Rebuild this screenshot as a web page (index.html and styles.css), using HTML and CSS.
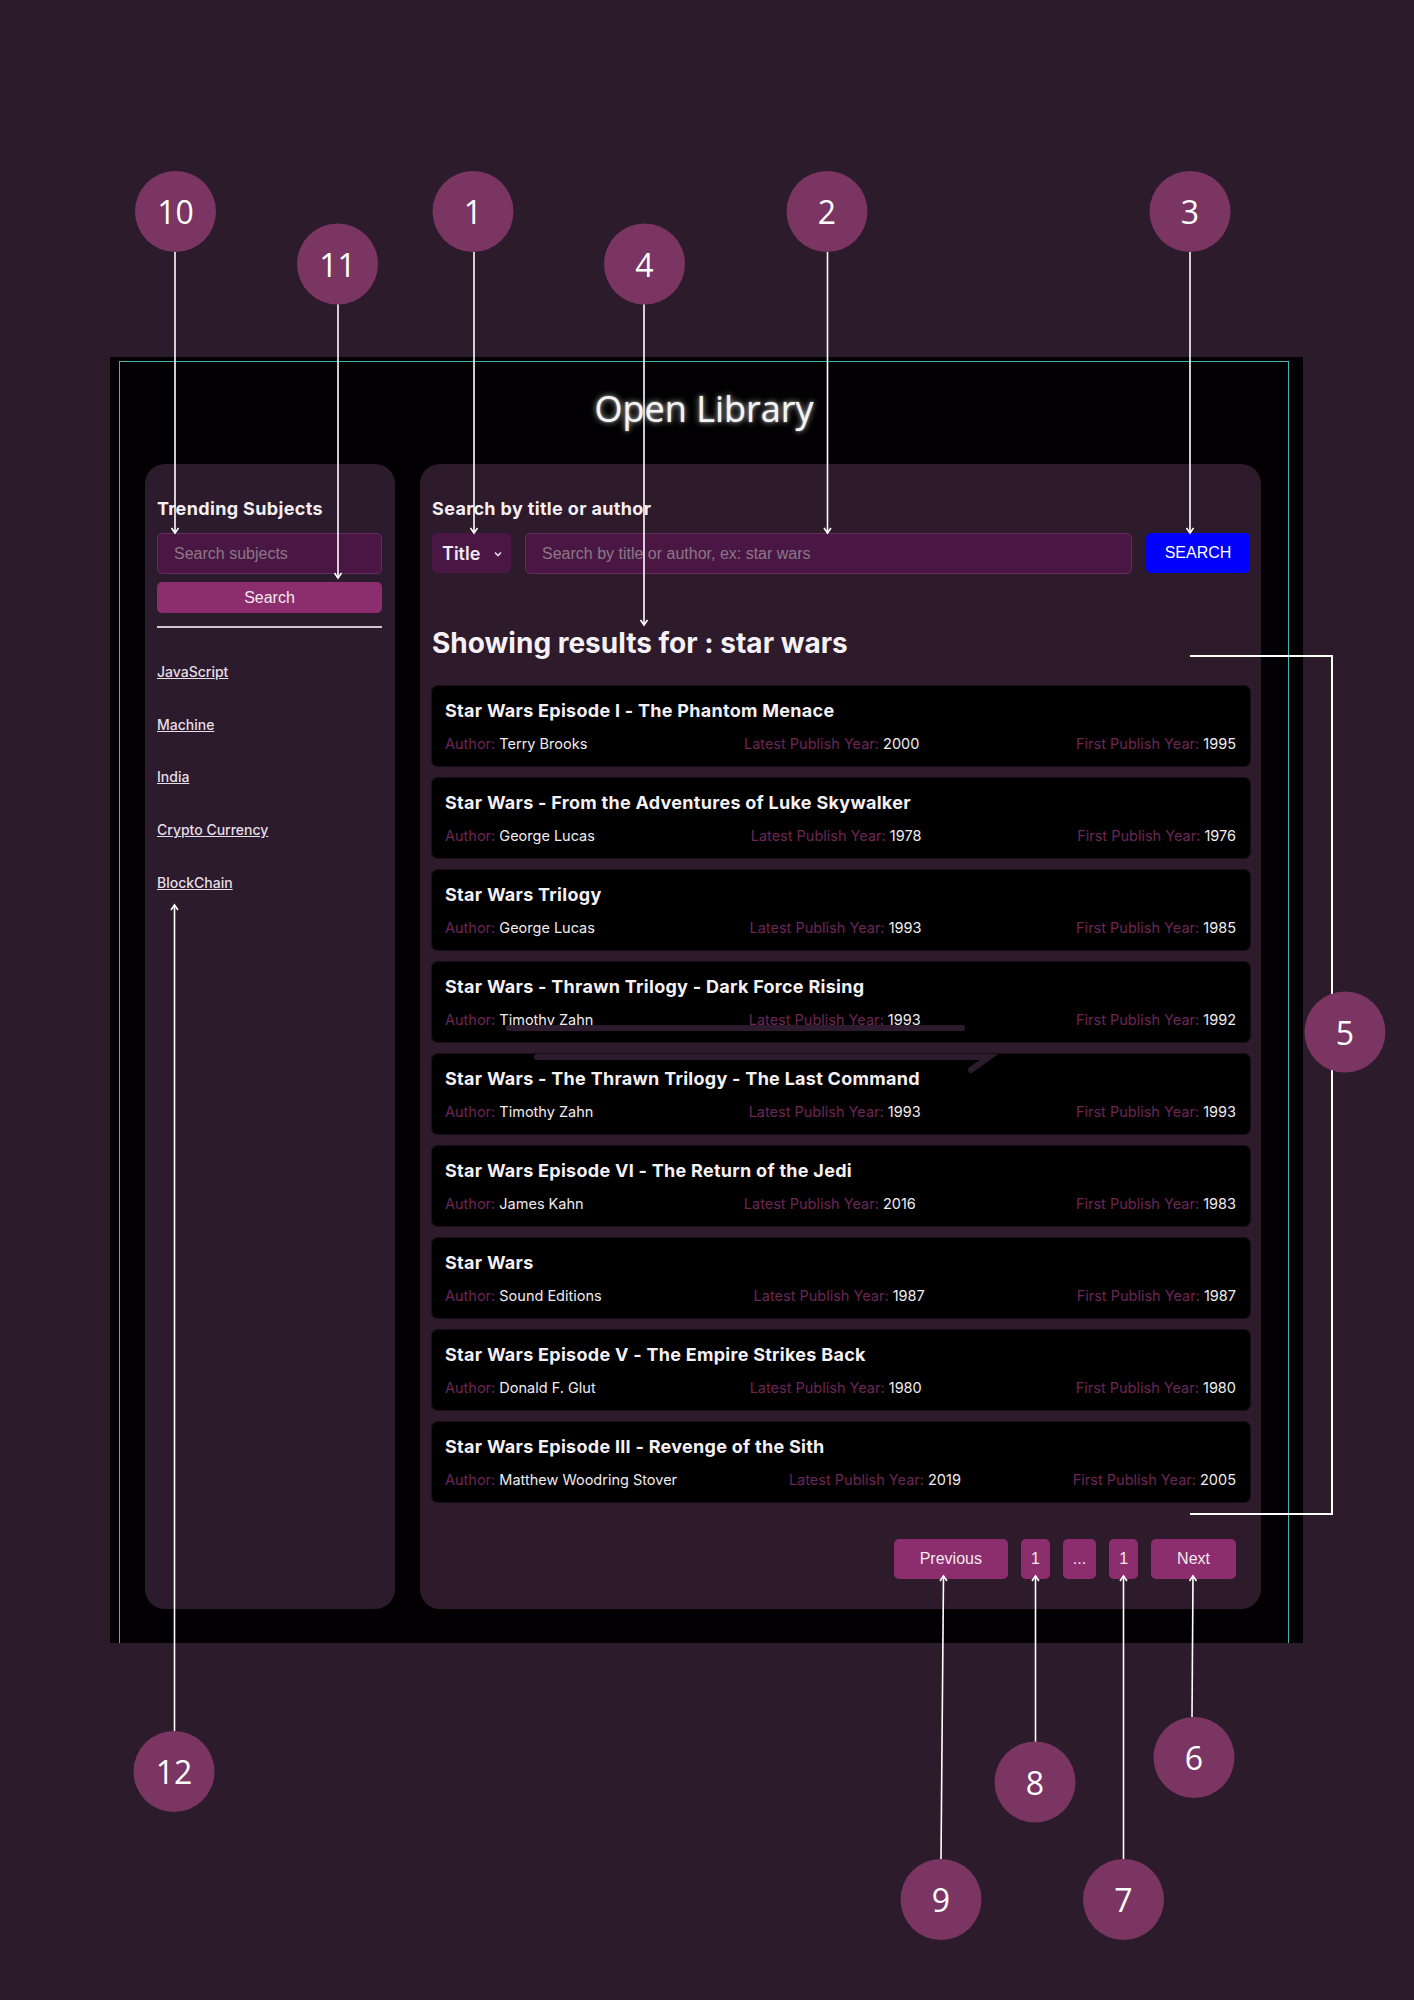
FILE: index.html
```html
<!DOCTYPE html>
<html lang="en">
<head>
<meta charset="utf-8">
<title>Open Library</title>
<link rel="stylesheet" href="styles.css">
</head>
<body>
<div class="app">
  <div class="frame">
    <h1 class="brand">Open Library</h1>
    <div class="panels">
      <aside class="side">
        <h2 class="label">Trending Subjects</h2>
        <input class="field side-field" type="text" placeholder="Search subjects">
        <button class="btn side-btn">Search</button>
        <hr class="rule">
        <nav class="subjects">
          <a href="#">JavaScript</a>
          <a href="#">Machine</a>
          <a href="#">India</a>
          <a href="#">Crypto Currency</a>
          <a href="#">BlockChain</a>
        </nav>
      </aside>
      <main class="main">
        <h2 class="label">Search by title or author</h2>
        <div class="search-row">
          <div class="select"><span>Title</span><svg class="chev" width="8" height="6" viewBox="0 0 8 6"><path d="M1 1.5 L4 4.5 L7 1.5" fill="none" stroke="#e8dce6" stroke-width="1.6"/></svg></div>
          <input class="field main-field" type="text" placeholder="Search by title or author, ex: star wars">
          <button class="btn-blue">SEARCH</button>
        </div>
        <h3 class="results">Showing results for : star wars</h3>
        <div class="cards">
          <div class="card"><div class="card-title">Star Wars Episode I - The Phantom Menace</div><div class="meta"><span><em>Author:</em> Terry Brooks</span><span><em>Latest Publish Year:</em> 2000</span><span><em>First Publish Year:</em> 1995</span></div></div>
          <div class="card"><div class="card-title">Star Wars - From the Adventures of Luke Skywalker</div><div class="meta"><span><em>Author:</em> George Lucas</span><span><em>Latest Publish Year:</em> 1978</span><span><em>First Publish Year:</em> 1976</span></div></div>
          <div class="card"><div class="card-title">Star Wars Trilogy</div><div class="meta"><span><em>Author:</em> George Lucas</span><span><em>Latest Publish Year:</em> 1993</span><span><em>First Publish Year:</em> 1985</span></div></div>
          <div class="card"><div class="card-title">Star Wars - Thrawn Trilogy - Dark Force Rising</div><div class="meta"><span><em>Author:</em> Timothy Zahn</span><span><em>Latest Publish Year:</em> 1993</span><span><em>First Publish Year:</em> 1992</span></div></div>
          <div class="card"><div class="card-title">Star Wars - The Thrawn Trilogy - The Last Command</div><div class="meta"><span><em>Author:</em> Timothy Zahn</span><span><em>Latest Publish Year:</em> 1993</span><span><em>First Publish Year:</em> 1993</span></div></div>
          <div class="card"><div class="card-title">Star Wars Episode VI - The Return of the Jedi</div><div class="meta"><span><em>Author:</em> James Kahn</span><span><em>Latest Publish Year:</em> 2016</span><span><em>First Publish Year:</em> 1983</span></div></div>
          <div class="card"><div class="card-title">Star Wars</div><div class="meta"><span><em>Author:</em> Sound Editions</span><span><em>Latest Publish Year:</em> 1987</span><span><em>First Publish Year:</em> 1987</span></div></div>
          <div class="card"><div class="card-title">Star Wars Episode V - The Empire Strikes Back</div><div class="meta"><span><em>Author:</em> Donald F. Glut</span><span><em>Latest Publish Year:</em> 1980</span><span><em>First Publish Year:</em> 1980</span></div></div>
          <div class="card"><div class="card-title">Star Wars Episode III - Revenge of the Sith</div><div class="meta"><span><em>Author:</em> Matthew Woodring Stover</span><span><em>Latest Publish Year:</em> 2019</span><span><em>First Publish Year:</em> 2005</span></div></div>
        </div>
        <div class="pager">
          <button class="pg wide">Previous</button>
          <button class="pg">1</button>
          <button class="pg">...</button>
          <button class="pg">1</button>
          <button class="pg wide">Next</button>
        </div>
      </main>
    </div>
  </div>
</div>

<svg class="notes" width="1414" height="2000" viewBox="0 0 1414 2000">
  <g class="smudge">
    <line x1="509" y1="1028" x2="962" y2="1028"/>
    <polyline points="537,1057 989,1057 971,1070"/>
  </g>
  <g class="lines">
    <line x1="175" y1="252" x2="175" y2="533"/><polyline points="171.5,528 175,533 178.5,528"/>
    <line x1="338" y1="304" x2="338" y2="578"/><polyline points="334.5,573 338,578 341.5,573"/>
    <line x1="474" y1="252" x2="474" y2="533"/><polyline points="470.5,528 474,533 477.5,528"/>
    <line x1="644" y1="304" x2="644" y2="625"/><polyline points="640.5,620 644,625 647.5,620"/>
    <line x1="827.5" y1="252" x2="827.5" y2="533"/><polyline points="824,528 827.5,533 831,528"/>
    <line x1="1190" y1="252" x2="1190" y2="533"/><polyline points="1186.5,528 1190,533 1193.5,528"/>
    <polyline class="bracket" points="1190,656 1332,656 1332,1514 1190,1514"/>
    <line x1="174.5" y1="1731" x2="174.5" y2="905"/><polyline points="171,910 174.5,905 178,910"/>
    <line x1="941" y1="1859" x2="943.5" y2="1576"/><polyline points="940,1581 943.5,1576 947,1581"/>
    <line x1="1035.5" y1="1742" x2="1035.5" y2="1576"/><polyline points="1032,1581 1035.5,1576 1039,1581"/>
    <line x1="1123.5" y1="1859" x2="1123.5" y2="1576"/><polyline points="1120,1581 1123.5,1576 1127,1581"/>
    <line x1="1192" y1="1717" x2="1193" y2="1576"/><polyline points="1189.5,1581 1193,1576 1196.5,1581"/>
  </g>
  <g class="dots">
    <circle cx="175.5" cy="211.5" r="40.5"/><text x="175.5" y="211.5">10</text>
    <circle cx="473" cy="211.5" r="40.5"/><text x="473" y="211.5">1</text>
    <circle cx="337.5" cy="264" r="40.5"/><text x="337.5" y="264">11</text>
    <circle cx="644.5" cy="264" r="40.5"/><text x="644.5" y="264">4</text>
    <circle cx="827" cy="211.5" r="40.5"/><text x="827" y="211.5">2</text>
    <circle cx="1190" cy="211.5" r="40.5"/><text x="1190" y="211.5">3</text>
    <circle cx="1345" cy="1032" r="40.5"/><text x="1345" y="1032">5</text>
    <circle cx="174" cy="1771.5" r="40.5"/><text x="174" y="1771.5">12</text>
    <circle cx="1194" cy="1757.5" r="40.5"/><text x="1194" y="1757.5">6</text>
    <circle cx="1035" cy="1782" r="40.5"/><text x="1035" y="1782">8</text>
    <circle cx="941" cy="1899.5" r="40.5"/><text x="941" y="1899.5">9</text>
    <circle cx="1123.5" cy="1899.5" r="40.5"/><text x="1123.5" y="1899.5">7</text>
  </g>
</svg>
</body>
</html>
```

FILE: styles.css
```css
* { box-sizing: border-box; }

html, body {
  margin: 0;
  padding: 0;
}

body {
  position: relative;
  width: 1414px;
  height: 2000px;
  overflow: hidden;
  background: #2b1b2b;
  font-family: Inter, Lato, "Liberation Sans", sans-serif;
  color: #f2eef2;
}

.app {
  margin: 357px 0 0 110px;
  width: 1193px;
  height: 1286px;
  background: #020002;
  overflow: hidden;
}

.frame {
  margin: 4px 0 0 9px;
  width: 1170px;
  height: 1300px;
  border: 1px solid #3fb8aa;
  border-bottom: none;
}

.brand {
  margin: 22px 0 0;
  text-align: center;
  font-family: "Open Sans", sans-serif;
  font-weight: 400;
  font-size: 36px;
  line-height: 49px;
  color: #f4f4f4;
  text-shadow: 0 0 6px rgba(255, 255, 255, 0.75), 0 0 2px rgba(255, 255, 255, 0.6);
}

.panels {
  display: flex;
  gap: 25px;
  margin-top: 31px;
  padding-left: 25px;
  height: 1145px;
}

.side {
  width: 250px;
  padding: 34px 13px 0 12px;
  background: #2c1b2c;
  border-radius: 20px;
  display: flex;
  flex-direction: column;
}

.main {
  width: 841px;
  padding: 34px 11px 0 12px;
  background: #2d1a2b;
  border-radius: 20px;
  display: flex;
  flex-direction: column;
}

.label {
  margin: 0;
  font-size: 18px;
  line-height: 22px;
  font-weight: 700;
  letter-spacing: 0.35px;
  color: #f3eff3;
}

.field {
  height: 41px;
  margin-top: 13px;
  padding: 0 16px;
  border: 1px solid #672a5e;
  border-radius: 5px;
  background: #4a1744;
  font-family: "Liberation Sans", Arial, sans-serif;
  font-size: 16px;
  color: #eee;
  outline: none;
}

.field::placeholder {
  color: #8b7787;
}

.side-btn {
  margin-top: 8px;
  height: 31px;
}

.btn, .pg {
  border: none;
  border-radius: 5px;
  background: #8c2d6d;
  color: #f4e8f0;
  font-family: "Liberation Sans", Arial, sans-serif;
  font-size: 16px;
}

.rule {
  margin: 13px 0 0;
  border: none;
  height: 2px;
  background: #cfc7cf;
}

.subjects {
  margin-top: 34px;
  display: flex;
  flex-direction: column;
  gap: 32.7px;
}

.subjects a {
  font-size: 14px;
  line-height: 20px;
  font-weight: 500;
  color: #e6dee6;
  text-decoration: underline;
}

.search-row {
  display: flex;
  align-items: flex-start;
  gap: 14px;
  margin-top: 13px;
}

.select {
  width: 79px;
  height: 40px;
  padding-left: 10px;
  display: flex;
  align-items: center;
  gap: 14px;
  background: #4a1644;
  border-radius: 5px;
  font-size: 18px;
  font-weight: 600;
  color: #f2eaf0;
}

.select .chev { margin-top: 1px; }

.main-field {
  margin-top: 0;
  width: 607px;
}

.btn-blue {
  width: 104px;
  height: 40px;
  border: none;
  border-radius: 5px;
  background: #0000fb;
  color: #fff;
  font-family: "Liberation Sans", Arial, sans-serif;
  font-size: 16px;
}

.results {
  margin: 52px 0 0;
  font-size: 28px;
  line-height: 34px;
  font-weight: 700;
  letter-spacing: 0;
  color: #f5f1f5;
}

.cards {
  margin-top: 26px;
  display: flex;
  flex-direction: column;
  gap: 12px;
}

.card {
  height: 80px;
  padding: 14px 14px 0 13px;
  background: #000;
  border-radius: 6px;
  box-shadow: 0 0 0 1px #180c16;
}

.card-title {
  font-size: 18px;
  line-height: 22px;
  font-weight: 700;
  letter-spacing: 0.28px;
  color: #f4f0f4;
}

.meta {
  margin-top: 13px;
  display: flex;
  justify-content: space-between;
  font-size: 14.5px;
  line-height: 18px;
  color: #f0ecf0;
}

.meta em {
  font-style: normal;
  color: #6d2656;
}

.pager {
  margin-top: 37px;
  padding-right: 14px;
  display: flex;
  justify-content: flex-end;
  gap: 13px;
}

.pg {
  height: 40px;
  padding: 0 10px;
}

.pg.wide {
  padding: 0 26px;
}

.notes {
  position: absolute;
  top: 0;
  left: 0;
  pointer-events: none;
}

.smudge line, .smudge polyline {
  fill: none;
  stroke: #2c1b2c;
  stroke-width: 6;
  stroke-linecap: round;
}

.lines line, .lines polyline {
  fill: none;
  stroke: #ffffff;
  stroke-width: 1.6;
}

.lines .bracket {
  stroke-width: 2;
}

.dots circle {
  fill: #7a3562;
}

.dots text {
  fill: #ffffff;
  font-family: "Open Sans", sans-serif;
  font-size: 32px;
  text-anchor: middle;
  dominant-baseline: central;
}
```
